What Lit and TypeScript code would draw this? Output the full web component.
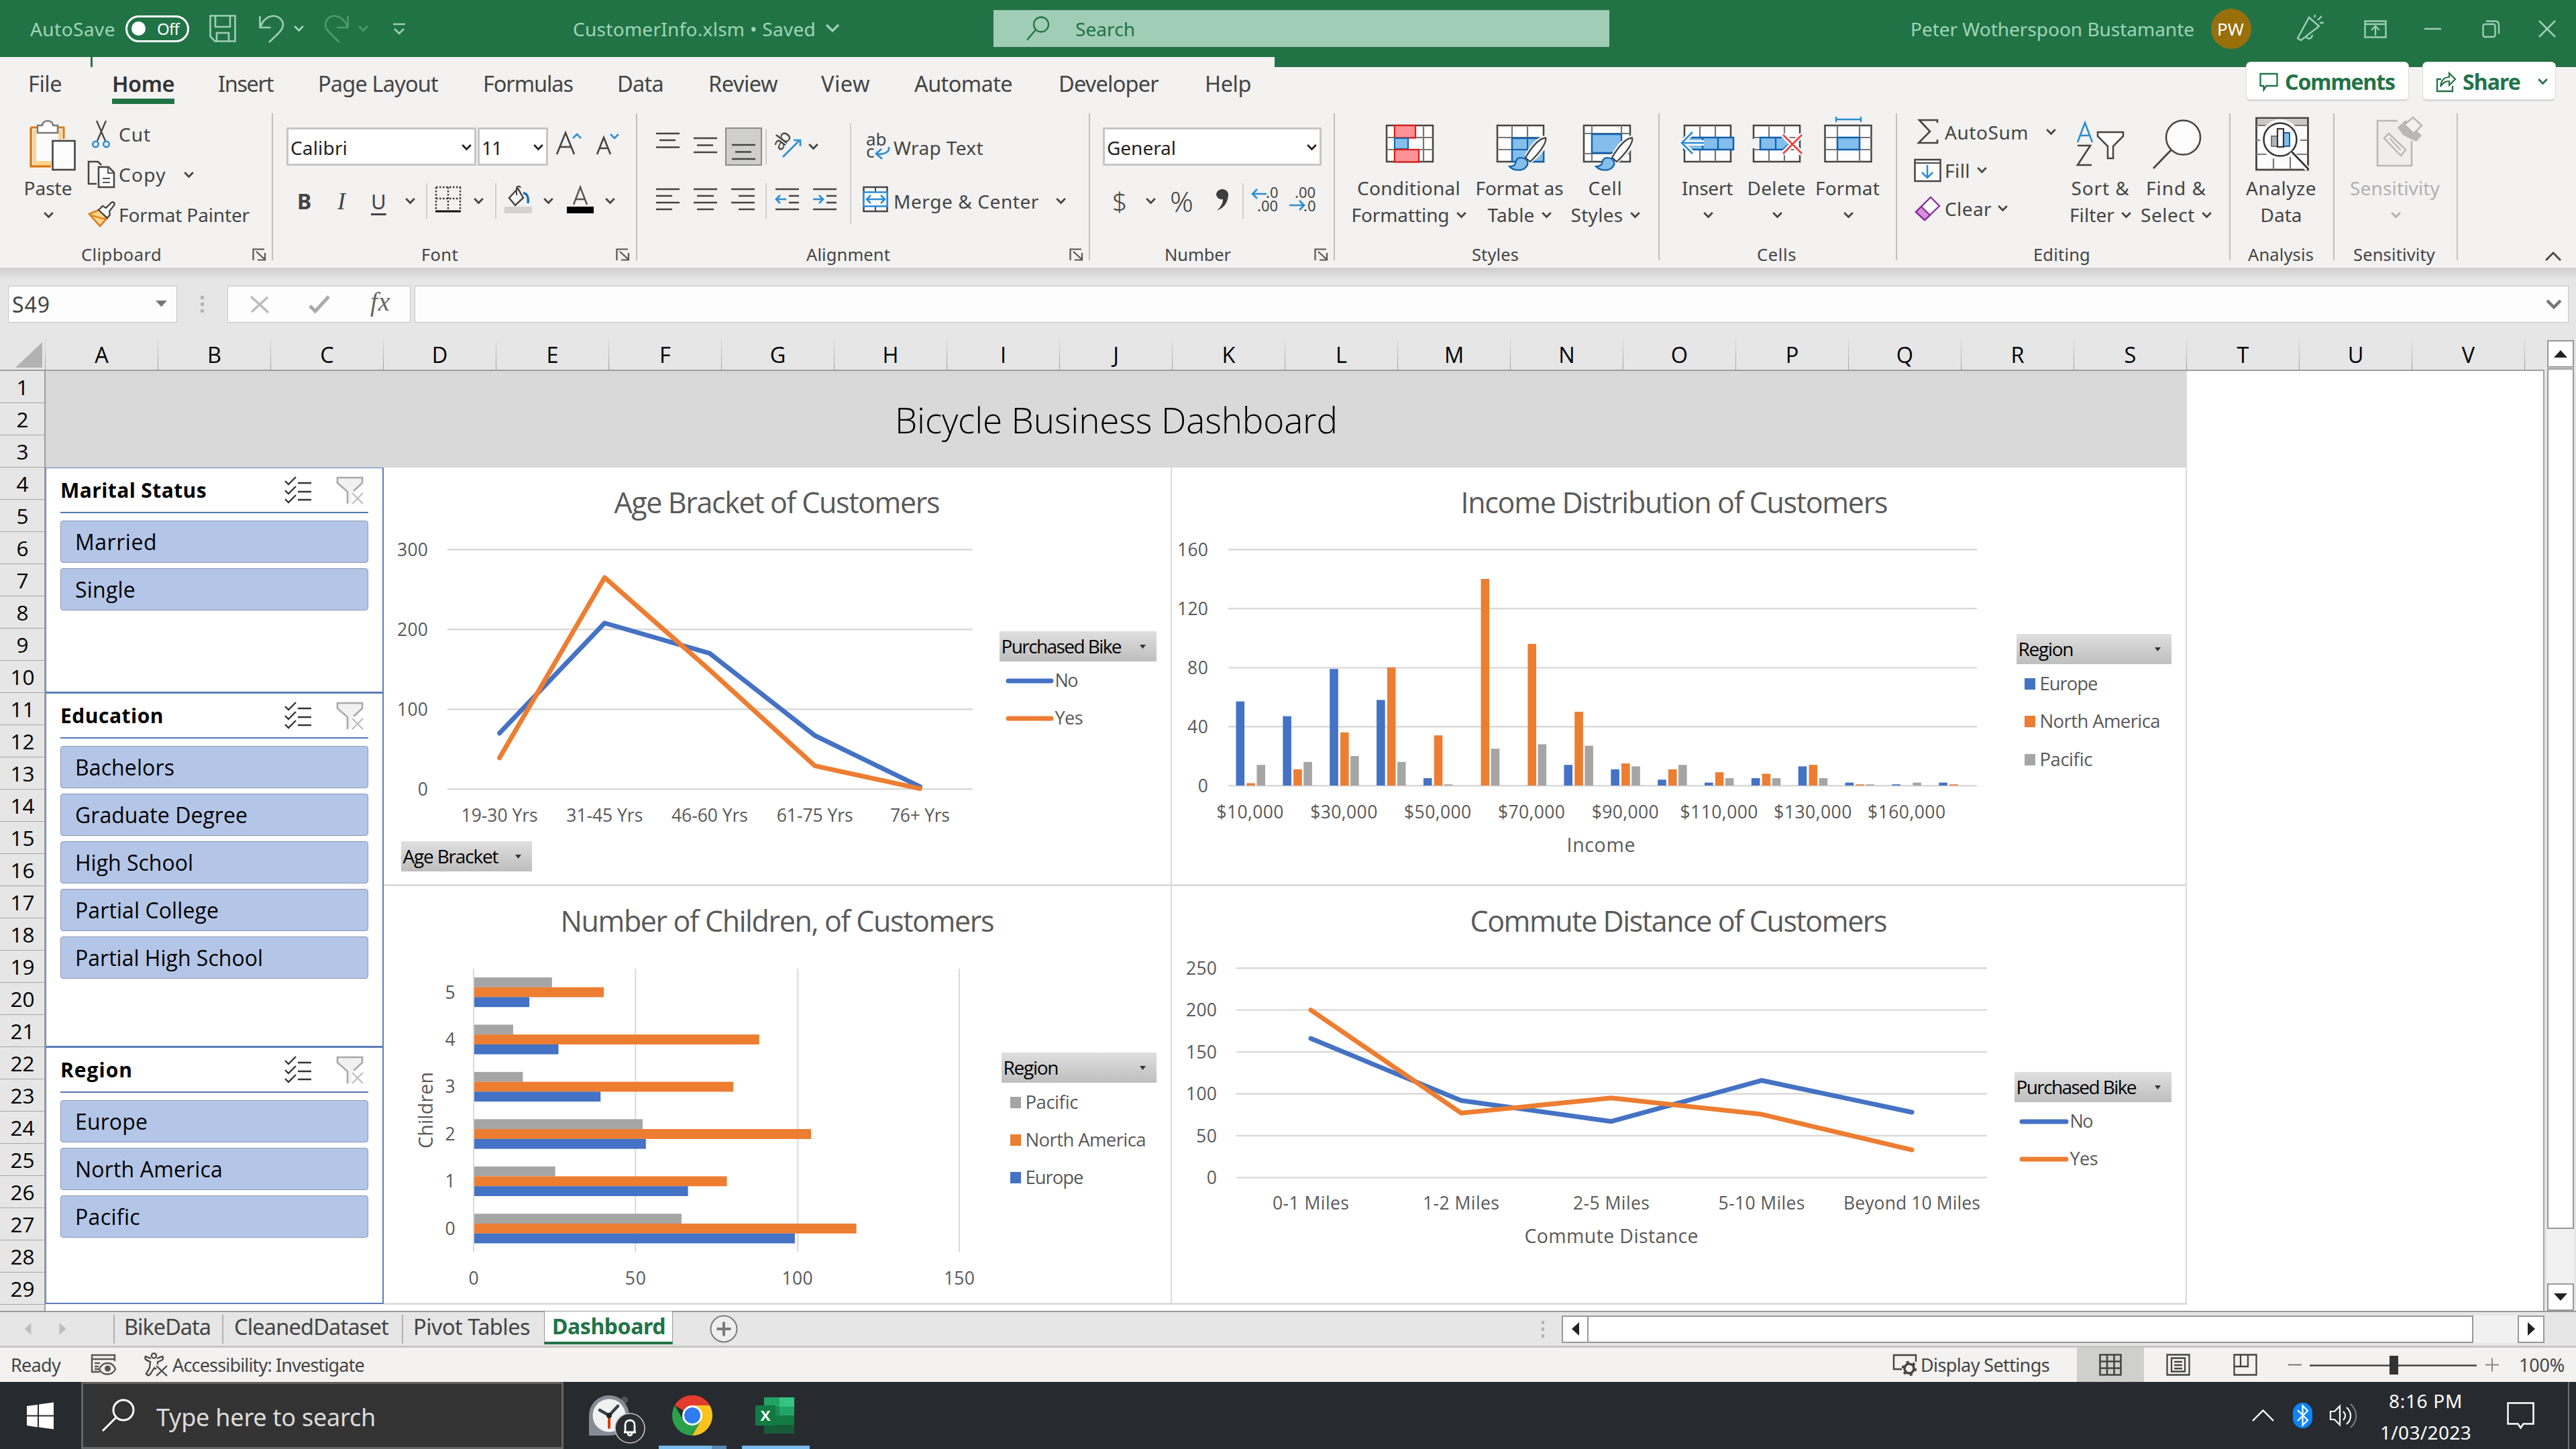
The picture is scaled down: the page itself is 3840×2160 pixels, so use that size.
import { LitElement, html, svg, css, unsafeCSS } from "lit";
import { customElement } from "lit/decorators.js";

/* ---------- helpers ---------- */

// Grid whose columns begin at the given x positions, inside a box that begins at `origin`.
const track = (origin: number, ...xs: number[]) =>
  unsafeCSS(
    `display:grid;align-items:center;justify-items:start;padding-left:${xs[0] - origin}px;grid-template-columns:` +
      xs.slice(1).map((x, i) => `${x - xs[i]}px`).join(" ") + " auto;"
  );

// Text label with a nominal width; letter spacing is computed once it is laid out.
const T = (text: string, w: number, cls = "") =>
  html`<span class="t ${cls}" data-w=${w}>${text}</span>`;

const ico = (x: number, y: number, w: number, h: number, body: unknown) =>
  html`<svg class="i" width=${w} height=${h} viewBox="${x} ${y} ${w} ${h}" fill="none">${body}</svg>`;

const chev = (cls = "") =>
  html`<svg class="i chev ${cls}" width="15" height="11" viewBox="0 0 15 11" fill="none"><path d="M1.2 2l6.3 6.4L13.8 2" stroke="currentColor" stroke-width="2.8"/></svg>`;

const launcher = () =>
  html`<svg class="i" width="21" height="19" viewBox="0 0 21 19" fill="none" stroke="#555" stroke-width="2.2"><path d="M1.5 18V1.5H18M6 5l12 11M19 7v10.500H8"/></svg>`;

class Fitted extends LitElement {
  firstUpdated() {
    this.renderRoot.querySelectorAll<HTMLElement>("[data-w]").forEach((el) => {
      const want = Number(el.dataset.w) + 3;
      const have = el.getBoundingClientRect().width;
      const n = (el.textContent || "").length;
      if (n > 0 && have > 0) el.style.letterSpacing = `${(want - have) / n}px`;
    });
  }
}

const base = css`
  * { box-sizing: border-box; }
  .t { white-space: pre; width: max-content; display: inline-block; margin-left: -2px; }
  .i { display: block; flex: none; overflow: visible; }
`;

const BLUE = "#4472c4", ORANGE = "#ed7d31", GRAY = "#a5a5a5";

/* ---------- charts ---------- */

const ct = (text: string, x: number, y: number, size: number, w: number, anchor = "start", fill = "#595959") =>
  svg`<text x=${anchor === "start" ? x - 1.5 : x} y=${y} font-size=${size} textLength=${w + 2} text-anchor=${anchor} fill=${fill}>${text}</text>`;

const hGrid = (x1: number, x2: number, ys: number[]) =>
  ys.map((y) => svg`<path d="M${x1} ${y}H${x2}" stroke="#d9d9d9" stroke-width="2.400"/>`);

const field = (text: string, x: number, y: number, w: number, tw: number) => svg`
  <rect x=${x} y=${y} width=${w} height="45" fill="url(#btn)"/>
  ${ct(text, x + 4, y + 32.5, 28, tw, "start", "#000")}
  <path d="M${x + w - 25} ${y + 20}h9l-4.500 6z" fill="#333"/>`;

const lineKey = (text: string, x1: number, x2: number, y: number, tw: number, color: string) => svg`
  <path d="M${x1 + 3} ${y}H${x2 - 3}" stroke=${color} stroke-width="7" stroke-linecap="round"/>
  ${ct(text, x2 + 4, y + 9, 27, tw)}`;

const boxKey = (text: string, x: number, y: number, tw: number, color: string) => svg`
  <rect x=${x} y=${y} width="16" height="17" fill=${color}/>
  ${ct(text, x + 24, y + 17.5, 27.5, tw)}`;

const series = (xs: number[], vals: number[], zero: number, unit: number, color: string) => svg`
  <polyline points=${xs.map((x, i) => `${x},${zero - vals[i] * unit}`).join(" ")} fill="none" stroke=${color}
    stroke-width="7" stroke-linecap="round" stroke-linejoin="round"/>`;

const defs = svg`<defs><linearGradient id="btn" x1="0" y1="0" x2="0" y2="1"><stop offset="0" stop-color="#dfdfdf"/><stop offset="1" stop-color="#bebebe"/></linearGradient></defs>`;

const chartStyles = css`
  :host { display: block; background: #fff; border-right: 2px solid #d9d9d9; border-bottom: 3px solid #dcdcdc; box-sizing: border-box; overflow: hidden; }
  svg { display: block; font-family: "Open Sans", sans-serif; }
`;

@customElement("age-chart")
class AgeChart extends LitElement {
  static styles = chartStyles;
  render() {
    const xs = [744.6, 901.3, 1058, 1214.7, 1371.4];
    const unit = 356.9 / 300;
    return html`<svg width="1175" height="624" viewBox="572 697 1175 624">${defs}
      ${ct("Age Bracket of Customers", 917, 765, 43, 484)}
      ${hGrid(667, 1450, [819.3, 938.2, 1057.3, 1176.2])}
      ${[300, 200, 100, 0].map((v, i) => ct(String(v), 638, 829 + i * 119, 26.5, v ? 44 : 12.5, "end"))}
      ${series(xs, [70, 208, 170, 67, 3], 1176.2, unit, BLUE)}
      ${series(xs, [39, 265, 149, 29, 0.5], 1176.2, unit, ORANGE)}
      ${["19-30 Yrs", "31-45 Yrs", "46-60 Yrs", "61-75 Yrs", "76+ Yrs"].map((l, i) => ct(l, xs[i], 1225, 26.5, i === 4 ? 87 : 112, "middle"))}
      ${field("Purchased Bike", 1490, 941, 234, 178)}
      ${lineKey("No", 1500, 1570, 1015, 33, BLUE)}
      ${lineKey("Yes", 1500, 1570, 1071, 40, ORANGE)}
      ${field("Age Bracket", 598, 1254, 195, 141)}
    </svg>`;
  }
}

@customElement("income-chart")
class IncomeChart extends LitElement {
  static styles = chartStyles;
  render() {
    const europe = [57, 47, 79, 58, 5, 0, 0, 14, 11, 4, 2, 5, 13, 2, 0.8, 2];
    const america = [1.6, 11, 36, 80, 34, 140, 96, 50, 15, 11, 9, 8, 14, 0.8, 0, 0.8];
    const pacific = [14, 16, 20, 16, 0.8, 25, 28, 27, 13, 14, 5, 5, 5, 0.8, 2, 0];
    const bars = (vals: number[], x0: number, color: string) =>
      vals.map((v, i) => v ? svg`<rect x=${x0 + i * 69.85} y=${1171 - v * 2.2} width="12.600" height=${v * 2.2} fill=${color}/>` : null);
    const labels = ["$10,000", "$30,000", "$50,000", "$70,000", "$90,000", "$110,000", "$130,000", "$160,000"];
    return html`<svg width="1513" height="624" viewBox="1747 697 1513 624">${defs}
      ${ct("Income Distribution of Customers", 2179, 765, 43, 635)}
      ${hGrid(1831, 2947, [819.3, 907.2, 995.4, 1083.3, 1171.2])}
      ${[160, 120, 80, 40, 0].map((v, i) => ct(String(v), 1801, 829 + i * 88, 26.5, v > 99 ? 44 : v ? 29 : 12.5, "end"))}
      ${bars(europe, 1842.5, BLUE)}${bars(america, 1858.3, ORANGE)}${bars(pacific, 1873.4, GRAY)}
      ${labels.map((l, i) => ct(l, 1863.5 + i * 139.8, 1219.5, 26.5, i < 5 ? 98 : 114, "middle"))}
      ${ct("Income", 2337, 1269.5, 28.5, 100)}
      ${field("Region", 3006, 945, 231, 81)}
      ${boxKey("Europe", 3018, 1011, 85, BLUE)}
      ${boxKey("North America", 3018, 1067, 178, ORANGE)}
      ${boxKey("Pacific", 3018, 1124, 77, GRAY)}
    </svg>`;
  }
}

@customElement("children-chart")
class ChildrenChart extends LitElement {
  static styles = chartStyles;
  render() {
    const rows = [[5, 24, 40, 17], [4, 12, 88, 26], [3, 15, 80, 39], [2, 52, 104, 53], [1, 25, 78, 66], [0, 64, 118, 99]];
    const colors = [GRAY, ORANGE, BLUE];
    return html`<svg width="1175" height="624" viewBox="572 1321 1175 624">${defs}
      ${ct("Number of Children, of Customers", 837, 1389, 43, 645)}
      ${[706, 947.3, 1189.3, 1430].map((x) => svg`<path d="M${x} 1444V1866" stroke="#d9d9d9" stroke-width="2"/>`)}
      ${rows.map((r, i) => svg`
        ${[0, 1, 2].map((k) => svg`<rect x="707" y=${1457 + i * 70.45 + k * 14.7} width=${r[k + 1] * 4.827} height="14.800" fill=${colors[k]}/>`)}
        ${ct(String(r[0]), 671, 1488.5 + i * 70.4, 26.5, 12.5, "middle")}`)}
      ${[0, 50, 100, 150].map((v, i) => ct(String(v), 706 + i * 241.3, 1914.5, 26.5, [12.5, 29, 44, 44][i], "middle"))}
      <text transform="translate(644.500 1655) rotate(-90)" font-size="28.500" text-anchor="middle" textLength="114" fill="#595959">Children</text>
      ${field("Region", 1493, 1569, 231, 81)}
      ${boxKey("Pacific", 1506, 1635, 77, GRAY)}
      ${boxKey("North America", 1506, 1691, 178, ORANGE)}
      ${boxKey("Europe", 1506, 1747, 85, BLUE)}
    </svg>`;
  }
}

@customElement("commute-chart")
class CommuteChart extends LitElement {
  static styles = chartStyles;
  render() {
    const xs = [1954, 2178, 2402, 2626, 2850];
    const labels: [string, number][] = [["0-1 Miles", 112], ["1-2 Miles", 112], ["2-5 Miles", 112], ["5-10 Miles", 127], ["Beyond 10 Miles", 202]];
    return html`<svg width="1513" height="624" viewBox="1747 1321 1513 624">${defs}
      ${ct("Commute Distance of Customers", 2193, 1389, 43, 620)}
      ${hGrid(1843, 2962, [1443.2, 1505.6, 1568, 1630.5, 1693, 1755.4])}
      ${[250, 200, 150, 100, 50, 0].map((v, i) => ct(String(v), 1814, 1453 + i * 62.45, 26.5, v > 99 ? 44 : v ? 29 : 12.5, "end"))}
      ${series(xs, [166, 92, 67, 116, 78], 1755.4, 1.249, BLUE)}
      ${series(xs, [200, 77, 95, 75.5, 33], 1755.4, 1.249, ORANGE)}
      ${labels.map(([l, w], i) => ct(l, xs[i], 1803, 26.5, w, "middle"))}
      ${ct("Commute Distance", 2274, 1853, 28.5, 257)}
      ${field("Purchased Bike", 3003, 1598, 234, 178)}
      ${lineKey("No", 3011, 3083, 1672, 33, BLUE)}
      ${lineKey("Yes", 3011, 3083, 1728, 40, ORANGE)}
    </svg>`;
  }
}

/* ---------- slicers ---------- */

@customElement("sheet-slicer")
class SheetSlicer extends Fitted {
  static properties = { heading: { attribute: false }, items: { attribute: false } };
  declare heading: [string, number];
  declare items: [string, number][];
  static styles = [base, css`
    :host { display: flex; flex-direction: column; box-sizing: border-box; width: 504px; background: #fff; border: 2px solid #5b7db8; border-left: 1px solid #5b7db8; border-top-width: 1px; padding: 0 21px; font-family: "Open Sans", sans-serif; color: #000; }
    .head { height: 67px; border-bottom: 2px solid #5577b0; display: grid; grid-template-columns: 334px 77px auto; align-items: center; padding-bottom: 0; }
    .name { font-weight: 700; font-size: 30px; margin-left: 0; }
    .item { height: 63px; margin-top: 8px; border: 1px solid #8a97b3; border-radius: 4px; background: #b4c6e7; display: flex; align-items: center; padding-left: 23px; font-size: 32px; flex: none; }
    .first { margin-top: 11px; }
  `];
  render() {
    return html`<div class="head">
        ${T(this.heading[0], this.heading[1], "name")}
        ${ico(424, 710, 41, 39, svg`<path d="M425 716l5 5 11-11M425 730l5 5 11-11M425 743l5 5 11-11M444 719h20M444 732h20M444 744h20" stroke="#333" stroke-width="2.400"/>`)}
        ${ico(501, 709, 41, 42, svg`<path d="M503 711h37v7l-16 14v17h-6v-17l-15-14z" fill="#f1f1f1"/><path d="M518 750v-18l-15-13v-8h37v8l-13 12M541 711" stroke="#a9a9a9" stroke-width="2.600"/><path d="M525 734l16 16M541 734l-16 16" stroke="#bcbcbc" stroke-width="2.200"/>`)}
      </div>
      ${this.items.map(([l, w], i) => html`<div class="item ${i ? "" : "first"}">${T(l, w)}</div>`)}`;
  }
}

/* ---------- ribbon ---------- */

const D = "#444", B = "#2a8dd4";
const lines = (segs: number[][]) => svg`<path d=${segs.map(([x, y, w]) => `M${x} ${y}h${w}`).join("")} stroke=${D} stroke-width="2.600"/>`;
const gridBox = (x: number, y = 187) => svg`<rect x=${x} y=${y} width="69" height="54" fill="#fdfdfd" stroke="#444" stroke-width="2.500"/>`;
const brush = (x: number) => svg`
  <path d="M${x + 45} ${231}C${x + 52} 218 ${x + 62} 207 ${x + 73} 205C${x + 75} 214 ${x + 64} 228 ${x + 49} 240z" fill="#fff" stroke="#f3f2f1" stroke-width="7"/>
  <path d="M${x + 42} 235C${x + 52} 218 ${x + 63} 206 ${x + 72} 205.500C${x + 74} 213 ${x + 62} 229 ${x + 49} 241z" fill="#fdfdfd" stroke="#444" stroke-width="2.300"/>
  <path d="M${x + 18} 248c8 0 9-3 10-8c2-7 14-6 17 1c2 7-6 13-14 12.500c-5 0-10-2-13-5.500z" fill="#83beec" stroke="#0f62ad" stroke-width="2.200"/>`;

@customElement("excel-ribbon")
class ExcelRibbon extends Fitted {
  static styles = [base, css`
    :host { display: flex; height: 234px; background: #f3f2f1; font-family: "Noto Sans", sans-serif; font-size: 28px; color: #444; line-height: 40px; overflow: hidden; }
    .group { height: 234px; flex: none; display: flex; flex-direction: column; }
    .body { height: 199px; display: flex; flex: none; }
    .foot { height: 30px; font-size: 25.500px; line-height: 30px; }
    .rule { width: 2px; margin: 4px 0 11px; background: #c1c0bf; flex: none; }
    .vr { width: 2px; height: 53px; background: #cfcecd; }
    .chev { color: #444; }
    .w405 { width: 405px; } .w541 { width: 541px; } .w673 { width: 673px; } .w363 { width: 363px; } .w482 { width: 482px; }
    .w352 { width: 352px; } .w495 { width: 495px; } .w153 { width: 153px; } .w182 { width: 182px; }
    .big { display: flex; flex-direction: column; align-items: center; flex: none; }
    .two { display: flex; align-items: center; gap: 10px; height: 40px; }
    .dim { color: #b1b0af; } .dim .chev { color: #b1b0af; }
    .fclip { ${track(0, 123, 376)} } .ffont { ${track(407, 630, 918)} } .falign { ${track(950, 1204, 1594)} }
    .fnum { ${track(1625, 1738, 1959)} } .fsty { ${track(1990, 2196)} } .fcell { ${track(2474, 2621)} }
    .fedit { ${track(2828, 3033)} } .fana { ${track(3325, 3353)} } .fsen { ${track(3480, 3510)} }
    .paste { width: 75px; margin-left: 35px; }
    .stack { display: flex; flex-direction: column; padding-top: 5px; }
    .clipstack { margin-left: 20px; }
    .clipstack > div { height: 60px; ${track(130, 130, 179, 274)} }
    .clipstack > .wide { grid-template-columns: 49px auto; }
    .rows { display: flex; flex-direction: column; padding-top: 25px; }
    .r1 { height: 57px; margin-bottom: 26px; } .r2 { height: 53px; }
    .combo { height: 57px; background: #fff; border: 3px solid #c6c6c6; display: flex; align-items: center; justify-content: space-between; padding: 2px 4px 0 5px; color: #222; }
    .combo .chev { color: #222; }
    .c1 { width: 283px; } .c2 { width: 105px; } .c3 { width: 326px; }
    .font1 { ${track(407, 427, 712, 829, 889)} }
    .font2 { ${track(407, 445, 503, 554, 604, 635, 649, 706, 738, 752, 810, 844, 902)} }
    .b { font-weight: 700; font-size: 32px; margin-left: -2px; } .it { font-family: "Liberation Serif", serif; font-style: italic; font-size: 36px; }
    .u { font-size: 31px; text-decoration: underline; text-decoration-thickness: 2.500px; text-underline-offset: 6px; margin-left: -1px; }
    .al1 { ${track(950, 978, 1034, 1081, 1141, 1154, 1205)} }
    .al2 { ${track(950, 978, 1034, 1090, 1141, 1155, 1212)} }
    .albox { width: 317px; flex: none; }
    .on { width: 55px; height: 57px; background: #cfcfcd; border: 2px solid #8b8b89; display: flex; align-items: center; justify-content: center; }
    .tall { width: 2px; height: 150px; margin-top: 19px; background: #cfcecd; }
    .wr1 { ${track(1269, 1287, 1334)} } .wr2 { ${track(1269, 1286, 1334, 1574)} }
    .wr1 .t { margin-top: 2px; }
    .num1 { ${track(1625, 1644)} }
    .num2 { ${track(1625, 1659, 1708, 1746, 1811, 1852, 1865, 1922)} }
    .dollar { font-size: 39px; font-weight: 300; margin-left: -1px; } .pct { font-size: 43px; font-weight: 300; }
    .styles { padding-left: 25px; gap: 12px; }
    .s1 { width: 172px; } .s2 { width: 124px; } .s3 { width: 104px; }
    .styles .s2 { margin-left: 5px; } .styles .s3 { margin-left: 2px; }
    .cells { padding-left: 28px; }
    .k1 { width: 88px; } .k2 { width: 116px; margin-left: 1px; } .k3 { width: 96px; margin-left: 0; }
    .edit { width: 250px; padding-top: 3px; flex: none; }
    .edit > div { height: 57px; }
    .e1 { ${track(2828, 2853, 2901, 3050)} } .e2 { ${track(2828, 2853, 2901, 2947)} } .e3 { ${track(2828, 2853, 2901, 2978)} }
    .sort { width: 106px; margin-left: 1px; } .find { width: 104px; margin-left: 8px; }
    .ana { width: 153px; } .sen { width: 182px; }
    .end { margin-left: auto; display: flex; align-items: flex-end; padding: 0 21px 10px 0; }
  `];
  clipboard() {
    return html`<div class="group w405"><div class="body">
      <div class="big paste">${ico(35, 165, 75, 95, svg`
        <path d="M46 190h49v17M46 190v58h30" stroke="#e07b12" stroke-width="3"/><path d="M49 193h43v15l-14 0v38H49z" fill="#fbd58d"/>
        <path d="M54 197h33v12h-9v31H54z" fill="#fbfbfb"/><path d="M46 190v58h30" stroke="#d9730a" stroke-width="2.500"/>
        <path d="M56 198v-11h7c0-9 16-9 16 0h7v11z" fill="#fff" stroke="#7a7a7a" stroke-width="2.500"/>
        <rect x="78.500" y="210" width="33" height="43" fill="#fdfdfd" stroke="#444" stroke-width="2.600"/>`)}
        ${T("Paste", 69)}<div class="two">${chev()}</div></div>
      <div class="stack clipstack">
        <div>${ico(130, 177, 40, 42, svg`<path d="M144 178l13 30M158 178l-13 30" stroke="#444" stroke-width="2.300"/><circle cx="142.500" cy="213" r="4.300" stroke="${B}" stroke-width="2.500"/><circle cx="158.500" cy="213" r="4.300" stroke="${B}" stroke-width="2.500"/>`)}${T("Cut", 45)}</div>
        <div>${ico(130, 238, 42, 41, svg`<path d="M144 272h-12v-33h14l5 5" stroke="#444" stroke-width="2.500"/><path d="M147 247h15l8 8v22h-23z" fill="#fdfdfd" stroke="#444" stroke-width="2.500"/><path d="M161 247v9h9M153 264h11M153 270h11" stroke="#555" stroke-width="2"/>`)}${T("Copy", 68)}${chev()}</div>
        <div class="wide">${ico(130, 297, 42, 40, svg`<path d="M133 316l16-7 10 14-10 11z" fill="#fbd58d" stroke="#e07b12" stroke-width="2.600"/><path d="M136 318l22 6" stroke="#e07b12" stroke-width="2"/><path d="M147 310l6-6 5 3 8-8c3-2 6 1 4 4l-7 9 1 5-4 5z" fill="#fff" stroke="#444" stroke-width="2.300"/>`)}${T("Format Painter", 192)}</div>
      </div></div><div class="foot fclip">${T("Clipboard", 117)}${launcher()}</div></div>`;
  }
  font() {
    return html`<div class="group w541"><div class="body"><div class="rows">
      <div class="r1 font1"><div class="combo c1">${T("Calibri", 82)}${chev()}</div><div class="combo c2">${T("11", 27)}${chev()}</div>
        ${ico(829, 190, 40, 57, svg`<path d="M830 230l13-32 13 32M835 219h16" stroke="#444" stroke-width="2.600"/><path d="M854 206l6-6 6 6" stroke="${B}" stroke-width="2.600"/>`)}
        ${ico(889, 190, 40, 57, svg`<path d="M890 230l10-25 10 25M894 221h12" stroke="#444" stroke-width="2.600"/><path d="M910 200l6 6 6-6" stroke="${B}" stroke-width="2.600"/>`)}</div>
      <div class="r2 font2"><span class="b">B</span><span class="it">I</span><span class="u">U</span>${chev()}<span class="vr"></span>
        ${ico(649, 273, 38, 53, svg`<path d="M650 279h37M650 279v34M668 279v34M686 279v34M650 296h37" stroke="#333" stroke-width="2.400" stroke-dasharray="2.500 2.500"/><path d="M649 315h38" stroke="#111" stroke-width="3"/>`)}${chev()}<span class="vr"></span>
        ${ico(752, 273, 42, 53, svg`<path d="M759 295l13-14 8 14-12 11z" fill="#fdfdfd" stroke="#444" stroke-width="2.500"/><path d="M770 291v-11c1-3 5-3 6 0" stroke="#444" stroke-width="2"/><path d="M780 288c6 0 8 6 7 15" stroke="#1b6db5" stroke-width="3.500"/><rect x="752" y="308" width="41" height="10" fill="#d3d2d1"/>`)}${chev()}
        ${ico(844, 273, 42, 53, svg`<path d="M855 305l10-26 10 26M858 297h13" stroke="#555" stroke-width="2.500"/><rect x="845" y="308" width="40" height="10" fill="#000"/>`)}${chev()}</div>
    </div></div><div class="foot ffont">${T("Font", 52)}${launcher()}</div></div>`;
  }
  alignment() {
    return html`<div class="group w673"><div class="body"><div class="rows albox">
      <div class="r1 al1">${ico(978, 190, 36, 57, lines([[978, 199, 35], [983, 209, 24], [978, 219.500, 35]]))}
        ${ico(1034, 190, 36, 57, lines([[1034, 206, 35], [1039, 216.500, 24], [1034, 227, 35]]))}
        <div class="on">${ico(1090, 190, 36, 53, lines([[1090, 214, 35], [1095, 224.500, 24], [1090, 235, 35]]))}</div><span class="vr"></span>
        ${ico(1154, 190, 42, 57, svg`<text transform="translate(1164 226) rotate(-54)" font-size="27" fill="#444" textLength="29" font-family="Noto Sans, sans-serif">ab</text><path d="M1167 234l25-25M1183 209h10v9" stroke="${B}" stroke-width="2.600"/>`)}${chev()}</div>
      <div class="r2 al2">${ico(978, 273, 36, 53, lines([[978, 282, 35], [978, 292, 24], [978, 302, 35], [978, 312, 24]]))}
        ${ico(1034, 273, 36, 53, lines([[1034, 282, 35], [1039, 292, 25], [1034, 302, 35], [1039, 312, 25]]))}
        ${ico(1090, 273, 36, 53, lines([[1090, 282, 35], [1101, 292, 24], [1090, 302, 35], [1101, 312, 24]]))}<span class="vr"></span>
        ${ico(1155, 273, 37, 53, svg`${lines([[1156, 282, 35], [1176, 292, 15], [1176, 302, 15], [1156, 312, 35]])}<path d="M1172 297h-15M1163 291l-6 6 6 6" stroke="${B}" stroke-width="2.600"/>`)}
        ${ico(1212, 273, 37, 53, svg`${lines([[1212, 282, 35], [1232, 292, 15], [1232, 302, 15], [1212, 312, 35]])}<path d="M1212 297h15M1221 291l6 6-6 6" stroke="${B}" stroke-width="2.600"/>`)}</div>
      </div><span class="tall"></span>
      <div class="rows"><div class="r1 wr1">${ico(1287, 190, 42, 57, svg`<text font-size="26" fill="#444" font-family="Noto Sans, sans-serif"><tspan x="1291" y="217">ab</tspan><tspan x="1291" y="235">c</tspan></text><path d="M1325 219c1 7-4 11-18 11M1314 222l-8 7 9 8" stroke="${B}" stroke-width="2.800"/>`)}${T("Wrap Text", 131)}</div>
      <div class="r2 wr2">${ico(1286, 273, 40, 53, svg`<rect x="1287.500" y="279" width="35" height="36" fill="#fdfdfd" stroke="#444" stroke-width="2.500"/><path d="M1305 279v36" stroke="#444" stroke-width="2"/><rect x="1287.500" y="286.500" width="35" height="21" fill="#fdfdfd" stroke="${B}" stroke-width="2.500"/><path d="M1292 297h27M1298 291l-6 6 6 6M1313 291l6 6-6 6" stroke="${B}" stroke-width="2.500"/>`)}${T("Merge & Center", 214)}${chev()}</div></div>
    </div><div class="foot falign">${T("Alignment", 122)}${launcher()}</div></div>`;
  }
  number() {
    return html`<div class="group w363"><div class="body"><div class="rows">
      <div class="r1 num1"><div class="combo c3">${T("General", 100)}${chev()}</div></div>
      <div class="r2 num2"><span class="dollar">$</span>${chev()}<span class="pct t" data-w="36">%</span>
        ${ico(1811, 273, 22, 53, svg`<path d="M1813 289a9 8 0 1 1 18 2c-1 12-7 19-17 23c6-6 9-11 9-17c-6 1-10-3-10-8z" fill="#3d3d3d"/>`)}<span class="vr"></span>
        ${ico(1865, 273, 41, 53, svg`<path d="M1888 289h-21M1874 282l-7 7 7 7" stroke="${B}" stroke-width="2.600"/><text font-size="22" fill="#444" font-family="Noto Sans, sans-serif"><tspan x="1887" y="295">.0</tspan><tspan x="1874" y="315">.00</tspan></text>`)}
        ${ico(1922, 273, 41, 53, svg`<path d="M1922 306h22M1937 299l7 7-7 7" stroke="${B}" stroke-width="2.600"/><text font-size="22" fill="#444" font-family="Noto Sans, sans-serif"><tspan x="1930" y="295">.00</tspan><tspan x="1943" y="315">.0</tspan></text>`)}</div>
    </div></div><div class="foot fnum">${T("Number", 96)}${launcher()}</div></div>`;
  }
  stylesGroup() {
    return html`<div class="group w482"><div class="body styles">
      <div class="big s1">${ico(2059, 165, 86, 95, svg`${gridBox(2068)}<path d="M2080 187v54M2123 187v54M2068 205h69M2068 223h69" stroke="#777" stroke-width="2.200"/><rect x="2080" y="187" width="31" height="18.500" fill="#ff9296" stroke="#d8201c" stroke-width="2.300"/><rect x="2080" y="206" width="20" height="16" fill="#83beec" stroke="#0f62ad" stroke-width="2"/><rect x="2080" y="223" width="36" height="18.500" fill="#ff9296" stroke="#d8201c" stroke-width="2.300"/>`)}
        ${T("Conditional", 151)}<div class="two">${T("Formatting", 143)}${chev()}</div></div>
      <div class="big s2">${ico(2223, 165, 86, 95, svg`${gridBox(2232)}<path d="M2254 187v54M2277 187v54M2232 205h69M2232 223h69" stroke="#777" stroke-width="2.200"/><path d="M2254 206h47v35h-47z" fill="#83beec" stroke="#0f62ad" stroke-width="2.300"/><path d="M2277 206v35M2254 223h47" stroke="#0f62ad" stroke-width="2"/>${brush(2232)}`)}
        ${T("Format as", 128)}<div class="two">${T("Table", 67)}${chev()}</div></div>
      <div class="big s3">${ico(2351, 165, 86, 95, svg`${gridBox(2361)}<path d="M2373 187v54M2417 187v54M2361 199h69M2361 229h69" stroke="#777" stroke-width="2.200"/><path d="M2373 200h44v28h-44z" fill="#83beec" stroke="#0f62ad" stroke-width="2.300"/>${brush(2361)}`)}
        ${T("Cell", 48)}<div class="two">${T("Styles", 75)}${chev()}</div></div>
    </div><div class="foot fsty">${T("Styles", 67)}</div></div>`;
  }
  cells() {
    return html`<div class="group w352"><div class="body cells">
      <div class="big k1">${ico(2503, 165, 86, 95, svg`${gridBox(2511)}<path d="M2534 187v54M2557 187v54M2511 205h69M2511 223h69" stroke="#777" stroke-width="2.200"/><path d="M2510 205h74v18h-74z" fill="#83beec" stroke="#0f62ad" stroke-width="2.500"/><path d="M2538 205v18M2561 205v18" stroke="#0f62ad" stroke-width="2.300"/><path d="M2540 213h-32M2523 197l-16 16 16 16" stroke="#f8f8f8" stroke-width="8"/><path d="M2540 213h-32M2523 197l-16 16 16 16" stroke="${B}" stroke-width="2.600"/>`)}${T("Insert", 73)}<div class="two">${chev()}</div></div>
      <div class="big k2">${ico(2607, 165, 86, 95, svg`${gridBox(2615)}<path d="M2638 187v54M2661 187v54M2615 205h69M2615 223h69" stroke="#777" stroke-width="2.200"/><path d="M2612 207h14v14h-14z" fill="#f3f2f1"/><path d="M2625 205h34l10 9-10 9h-34z" fill="#83beec" stroke="#0f62ad" stroke-width="2.500"/><path d="M2648 205v18" stroke="#0f62ad" stroke-width="2.300"/><path d="M2659 201l28 28M2687 201l-28 28" stroke="#f8f8f8" stroke-width="8"/><path d="M2659 201l28 28M2687 201l-28 28" stroke="#e8403c" stroke-width="2.600"/>`)}${T("Delete", 84)}<div class="two">${chev()}</div></div>
      <div class="big k3">${ico(2711, 165, 86, 95, svg`${gridBox(2719.5)}<path d="M2738 187v54M2771 187v54M2720 205h69M2720 223h69" stroke="#777" stroke-width="2.200"/><rect x="2738" y="205" width="33" height="18" fill="#83beec" stroke="#0f62ad" stroke-width="2.500"/><path d="M2736 178h37M2736 174v8M2773 174v8" stroke="${B}" stroke-width="2.400"/>`)}${T("Format", 93)}<div class="two">${chev()}</div></div>
    </div><div class="foot fcell">${T("Cells", 56)}</div></div>`;
  }
  editing() {
    return html`<div class="group w495"><div class="body">
      <div class="stack edit">
        <div class="e1">${ico(2853, 174, 42, 42, svg`<path d="M2888 181v-4h-27l16 17-17 17h28v-5" stroke="#444" stroke-width="2.600"/>`)}${T("AutoSum", 122)}${chev()}</div>
        <div class="e2">${ico(2853, 233, 42, 36, svg`<rect x="2854.500" y="235" width="38" height="32" fill="#fdfdfd" stroke="#444" stroke-width="2.500"/><path d="M2854 240h39" stroke="#444" stroke-width="2"/><path d="M2873 243v18M2865 254l8 8 8-8" stroke="${B}" stroke-width="2.500"/>`)}${T("Fill", 35)}${chev()}</div>
        <div class="e3">${ico(2853, 288, 42, 40, svg`<path d="M2878 291l13 13-22 21-13-12z" fill="#fdfdfd" stroke="#8f2f9e" stroke-width="2.400"/><path d="M2864 305l13 13-8 7-13-12z" fill="#d690dc" stroke="#8f2f9e" stroke-width="2.400"/>`)}${T("Clear", 67)}${chev()}</div>
      </div>
      <div class="big sort">${ico(3093, 165, 80, 95, svg`<path d="M3098 212l11-29 11 29M3102 202h14" stroke="${B}" stroke-width="2.600"/><path d="M3098 217h19l-19 29h21" stroke="#444" stroke-width="2.600"/><path d="M3128 197h38v6l-15 15v18h-8v-18l-15-15z" fill="#fdfdfd" stroke="#444" stroke-width="2.500"/>`)}
        ${T("Sort &", 84)}<div class="two">${T("Filter", 64)}${chev()}</div></div>
      <div class="big find">${ico(3203, 165, 80, 95, svg`<circle cx="3252.500" cy="205" r="25.500" fill="#fdfdfd" stroke="#444" stroke-width="2.500"/><path d="M3235 223l-27 28" stroke="#444" stroke-width="2.800"/>`)}
        ${T("Find &", 87)}<div class="two">${T("Select", 78)}${chev()}</div></div>
    </div><div class="foot fedit">${T("Editing", 82)}</div></div>`;
  }
  analysis() {
    return html`<div class="group w153"><div class="body"><div class="big ana">${ico(3360, 165, 82, 95, svg`
      <rect x="3362.500" y="176" width="77" height="77" fill="#fdfdfd" stroke="#444" stroke-width="2.800"/><rect x="3364" y="177" width="74" height="9" fill="#c9c8c7"/><path d="M3362 187h77M3362 209h77M3362 230h77M3388 187v66M3413 187v66" stroke="#777" stroke-width="2.200"/>
      <circle cx="3398" cy="208" r="30" fill="#f8f8f8"/><circle cx="3398" cy="208" r="24.500" fill="#fdfdfd" stroke="#333" stroke-width="2.500"/><path d="M3414 227l25 25" stroke="#fdfdfd" stroke-width="8"/><path d="M3415 226l25 26" stroke="#333" stroke-width="2.800"/>
      <rect x="3385" y="203" width="9" height="15" fill="#b5b5b5" stroke="#777" stroke-width="2"/><rect x="3403" y="198" width="9" height="20" fill="#83beec" stroke="#0f62ad" stroke-width="2"/><rect x="3394" y="192" width="9" height="27" fill="#fff" stroke="#333" stroke-width="2.200"/>`)}
      ${T("Analyze", 102)}${T("Data", 59)}</div></div><div class="foot fana">${T("Analysis", 95)}</div></div>`;
  }
  sensitivity() {
    return html`<div class="group w182"><div class="body"><div class="big sen dim">${ico(3531, 165, 80, 95, svg`
      <path d="M3574 180h-30v67h51v-37" fill="#efeeed" stroke="#b9b8b7" stroke-width="2.500"/><path d="M3574 190l12-11 24 23-8 9-11-5-9-5z" fill="#b9b8b7"/><path d="M3597 175l13 12-12 12-14-13z" fill="#f3f2f1" stroke="#b9b8b7" stroke-width="2.500"/><path d="M3554 206l7-7 25 24-7 9z" fill="#f3f2f1" stroke="#b9b8b7" stroke-width="2.500"/><path d="M3562 206l17 18" stroke="#b9b8b7" stroke-width="2.500"/>`)}
      ${T("Sensitivity", 131)}<div class="two">${chev()}</div></div></div><div class="foot fsen">${T("Sensitivity", 119)}</div></div>`;
  }
  render() {
    const rule = html`<span class="rule"></span>`;
    return html`${this.clipboard()}${rule}${this.font()}${rule}${this.alignment()}${rule}${this.number()}${rule}${this.stylesGroup()}${rule}${this.cells()}${rule}${this.editing()}${rule}${this.analysis()}${rule}${this.sensitivity()}${rule}
      <div class="end">${ico(3794, 376, 25, 14, svg`<path d="M3795 389l11-11 11 11" stroke="#444" stroke-width="2.800"/>`)}</div>`;
  }
}

/* ---------- page ---------- */

const G = "#9fcfb5";

@customElement("app-root")
class AppRoot extends Fitted {
  static styles = [base, css`
    :host { display: flex; flex-direction: column; width: 3840px; height: 2160px; overflow: hidden; background: #e6e6e6; font-family: "Noto Sans", sans-serif; color: #444; }
    .title { height: 85px; flex: none; background: #217346; color: #9fd5b7; font-size: 28px; ${track(0, 47, 187, 312, 386, 438, 482, 534, 585, 856, 1230, 1481, 2850, 3296, 3423, 3524, 3613, 3700, 3784)} }
    .toggle { width: 95px; height: 40px; border: 3px solid #fff; border-radius: 20px; color: #fff; font-size: 24px; display: flex; align-items: center; gap: 19px; padding-left: 6px; line-height: 34px; }
    .knob { width: 21px; height: 21px; border-radius: 50%; background: #fff; flex: none; }
    .gdim { color: #4f9a6f; }
    .search { width: 918px; height: 55px; background: #a0cdb5; display: flex; align-items: center; gap: 40px; padding-left: 49px; color: #217346; }
    .avatar { width: 60px; height: 60px; border-radius: 50%; background: #986f0b; color: #fff; font-size: 26px; display: flex; align-items: center; justify-content: center; }
    .menu { height: 80px; flex: none; font-size: 32.500px;
      background: linear-gradient(#217346, #217346) 1900px 0 / 1940px 15px no-repeat, linear-gradient(#217346, #217346) 135px 0 / 3px 15px no-repeat, #f3f2f1;
      ${track(0, 44, 168, 327, 476, 722, 922, 1058, 1226, 1365, 1580, 1798, 3348, 3611)} }
    .menu > .t { height: 60px; line-height: 60px; }
    .menu .cur { font-weight: 600; color: #333; box-shadow: inset 0 -8px #217346; margin-left: -1px; }
    .act { height: 59px; background: #fff; border: 1px solid #dedcda; border-bottom: 3px solid #dcdad8; border-radius: 7px; align-self: start; margin-top: 7px; display: flex; align-items: center; padding: 2px 0 0 19px; gap: 12px; font-weight: 700; color: #217346; }
    .act .t { font-size: 32px; }
    .comments { width: 243px; } .share { width: 199px; }
    .share .chev { margin-left: 14px; }
    .fx { height: 105px; flex: none; background: linear-gradient(#cdcdcd, #d8d8d8 8px, #e6e6e6 17px); padding-top: 3px; ${track(0, 12, 299, 339, 618)} }
    .fx > div { height: 55px; background: #fdfdfd; border: 1px solid #c3c3c3; display: flex; align-items: center; }
    .name { width: 252px; justify-content: space-between; padding: 0 14px 0 7px; font-size: 32px; }
    .fx .fns { width: 273px; ${track(339, 371, 459, 549)} }
    .fx .bar { width: 3211px; justify-content: flex-end; padding-right: 9px; }
    .main { height: 1450px; flex: none; display: flex; }
    .left { width: 3793px; border-right: 2px solid #a3a3a3; display: flex; flex-direction: column; background: #fff; }
    .cols { height: 49px; background: #e6e6e6; border-bottom: 2px solid #9e9e9e; display: grid; grid-template-columns: 68px repeat(22, 168px) auto; flex: none; font-family: "Open Sans", sans-serif; font-size: 32.500px; color: #000; width: 3795px; }
    .cols div { display: flex; align-items: center; justify-content: center; border-right: 1px solid transparent; border-image: linear-gradient(#e0e0e0, #9b9b9b) 1; padding-top: 2px; line-height: 40px; }
    .cols div:first-child { justify-content: flex-end; padding: 3px 3px 0 0; }
    .cols div:last-child { border: none; }
    .sheet { flex: 1; display: flex; min-height: 0; overflow: hidden; }
    .nums { width: 68px; background: #e6e6e6; border-right: 2px solid #9e9e9e; font-family: "Open Sans", sans-serif; font-size: 31.500px; color: #000; flex: none; }
    .nums div { height: 48px; line-height: 48px; text-align: center; border-bottom: 1px solid #a8a8a8; padding-left: 1px; }
    .canvas { width: 3192px; flex: none; }
    .banner { height: 144px; background: #d9d9d9; color: #000; font-family: "Open Sans", sans-serif; font-weight: 300; font-size: 53px; display: flex; align-items: center; padding-left: 1268px; }
    .dash { display: grid; grid-template-columns: 504px 1175px 1513px; height: 1248px; }
    .slicers { display: grid; grid-template-rows: 336px 528px 383px; }
    .charts { display: grid; grid-template-columns: 1175px 1513px; grid-template-rows: 624px 624px; }
    .scroll { width: 47px; padding-top: 3px; padding-left: 4px; display: flex; flex-direction: column; background: #e6e6e6; }
    .sb { width: 40px; height: 41px; background: #fff; border: 2px solid #989898; display: flex; align-items: center; justify-content: center; flex: none; }
    .vthumb { width: 40px; height: 1283px; margin-top: 1px; background: #fff; border: 2px solid #989898; }
    .vtrack { width: 40px; flex: 1; background: #f1f1f1; }
    .sheets { height: 52px; flex: none; border-top: 2px solid #989898; background: #e6e6e6; font-size: 32.500px; line-height: 40px; ${track(0, 36, 88, 169, 187, 331, 351, 599, 618, 811, 1058, 2298, 2328)} padding-bottom: 0; }
    .sheets > .t { margin-top: -6px; }
    .tabsep { width: 2px; height: 43px; background: #b2b2b2; }
    .active { width: 192px; height: 49px; margin-top: -4px; background: #fff; border-bottom: 4px solid #217346; border-left: 1px solid #989898; border-right: 1px solid #989898; color: #217346; font-weight: 700; font-size: 32px; display: flex; align-items: center; padding-left: 13px; }
    .hbar { display: flex; height: 41px; width: 1465px; background: #f1f1f1; }
    .hthumb { width: 1321px; margin-left: -2px; background: #fff; border: 2px solid #989898; }
    .hbar .sb:last-child { margin-left: auto; }
    .status { height: 54px; flex: none; background: #f3f2f1; border-top: 3px solid #c6c6c6; font-size: 27px; line-height: 40px; ${track(0, 18, 135, 215, 259, 2821, 2865, 3097, 3229, 3328, 3410, 3757)} }
    .seln { width: 100px; height: 51px; background: #cfcfcd; display: flex; align-items: center; justify-content: center; margin-left: -1px; }
    .task { height: 100px; flex: none; background: #272b30; color: #fff; font-size: 28px; ${track(0, 40, 121, 876, 982, 1106, 3357, 3418, 3471, 3549, 3737, 3828)} }
    .find { width: 719px; height: 100px; background: #333; border: 3px solid #636363; display: flex; align-items: center; gap: 34px; padding-left: 28px; font-size: 36px; color: #dcdcdc; }
    .find .t { margin-top: 4px; }
    .app { height: 100px; display: flex; flex-direction: column; justify-content: flex-end; }
    .clock { display: flex; flex-direction: column; align-items: center; width: 136px; line-height: 47px; padding-top: 3px; }
    .peek { width: 2px; height: 100px; background: #6a6d70; }
  `];

  titleBar() {
    return html`<div class="title">
      ${T("AutoSave", 124)}
      <div class="toggle"><span class="knob"></span>${T("Off", 30)}</div>
      ${ico(312, 24, 42, 43, svg`<path d="M313.500 26.500h37v38h-30l-7-7zM321 27v16h22V27M323 64V52h18v12" stroke="${G}" stroke-width="2.600"/>`)}
      ${ico(386, 22, 40, 46, svg`<path d="M387.500 26v17h16M388 42c8-20 27-20 33-8c4 10-4 16-20 31" stroke="${G}" stroke-width="2.600"/>`)}
      ${chev()}
      ${ico(480, 22, 40, 46, svg`<path d="M516.500 26v17h-16M516 42c-8-20-27-20-32-8c-4 10 4 16 20 31" stroke="#4f9a6f" stroke-width="2.600"/>`)}
      ${chev("gdim")}
      ${ico(585, 34, 20, 19, svg`<path d="M586 37h18M588 44l7 7 7-7" stroke="${G}" stroke-width="2.600"/>`)}
      ${T("CustomerInfo.xlsm • Saved", 359)}
      ${ico(1230, 36, 22, 16, svg`<path d="M1232 38l9 9 9-9" stroke="${G}" stroke-width="3.200"/>`)}
      <div class="search">${ico(1530, 23, 35, 37, svg`<circle cx="1552" cy="35.500" r="11" stroke="#217346" stroke-width="2.300"/><path d="M1544 43.500l-13 15" stroke="#217346" stroke-width="2.400"/>`)}${T("Search", 86)}</div>
      ${T("Peter Wotherspoon Bustamante", 420)}
      <div class="avatar">${T("PW", 37)}</div>
      ${ico(3423, 22, 42, 41, svg`<path d="M3425 57l17-31 15 13-27 21zM3438 54c0 5 8 5 9-2M3450 26l1-4M3455 30l6-6M3458 34h6" stroke="${G}" stroke-width="2.400"/>`)}
      ${ico(3524, 28, 34, 28, svg`<path d="M3525.500 30.500h31v24h-31zM3525 35h32M3541 52V38M3535 44l6-6 6 6" stroke="${G}" stroke-width="2.400"/>`)}
      ${ico(3613, 38, 27, 6, svg`<path d="M3614 41h25" stroke="${G}" stroke-width="2.500"/>`)}
      ${ico(3699, 28, 26, 28, svg`<rect x="3700.500" y="35" width="18" height="19" rx="3" stroke="${G}" stroke-width="2.400"/><path d="M3705 30.500h13c4 0 6 2 6 6v13" stroke="${G}" stroke-width="2.400"/>`)}
      ${ico(3784, 29, 26, 26, svg`<path d="M3785 30l24 24M3809 30l-24 24" stroke="${G}" stroke-width="2.500"/>`)}
    </div>`;
  }

  menuBar() {
    const tabs: [string, number][] = [["File", 47], ["Home", 90], ["Insert", 79], ["Page Layout", 176], ["Formulas", 131], ["Data", 66], ["Review", 100], ["View", 70], ["Automate", 143], ["Developer", 146], ["Help", 66]];
    return html`<div class="menu">
      ${tabs.map(([l, w]) => T(l, w, l === "Home" ? "cur" : ""))}
      <div class="act comments">${ico(3368, 106, 28, 29, svg`<path d="M3369.500 109h25v18h-16l-4 6v-6h-5z" stroke="#217346" stroke-width="2.300"/>`)}${T("Comments", 161)}</div>
      <div class="act share">${ico(3630, 106, 30, 32, svg`<path d="M3638 118h-6v18h23v-8" stroke="#217346" stroke-width="2.300"/><path d="M3637 129c1-9 5-14 13-14v-6l9 9-9 9v-6c-6 0-9 2-13 8z" stroke="#217346" stroke-width="2.200"/>`)}${T("Share", 83)}${chev()}</div>
    </div>`;
  }

  formulaBar() {
    return html`<div class="fx">
      <div class="name">${T("S49", 54)}<svg class="i" width="17" height="10" viewBox="0 0 17 10"><path d="M0 0h17l-8.500 9.500z" fill="#777"/></svg></div>
      ${ico(299, 438, 5, 28, svg`<path d="M299 440h5v5h-5zM299 450h5v5h-5zM299 460h5v5h-5z" fill="#b3b3b3"/>`)}
      <div class="fns">
        ${ico(371, 439, 30, 27, svg`<path d="M373 441l26 24M398 442l-24 22" stroke="#bcbcbc" stroke-width="3.600"/>`)}
        ${ico(459, 439, 32, 27, svg`<path d="M461 455l8 8 20-22" stroke="#a9a9a9" stroke-width="5"/>`)}
        ${ico(549, 434, 34, 38, svg`<text x="551" y="463" font-family="Liberation Serif, serif" font-style="italic" font-size="39" fill="#666" textLength="29">fx</text>`)}
      </div>
      <div class="bar">${ico(3795, 446, 24, 15, svg`<path d="M3797 448l10 10 10-10" stroke="#777" stroke-width="4.500"/>`)}</div>
    </div>`;
  }

  sheetArea() {
    const letters = "ABCDEFGHIJKLMNOPQRSTUV".split("");
    return html`<div class="main"><div class="left">
      <div class="cols"><div>${ico(24, 509, 41, 41, svg`<path d="M64 510v38H24z" fill="#b2b2b2"/>`)}</div>${letters.map((l) => html`<div>${l}</div>`)}<div></div></div>
      <div class="sheet">
        <div class="nums">${Array.from({ length: 29 }, (_, i) => html`<div>${i + 1}</div>`)}</div>
        <div class="canvas">
          <div class="banner">${T("Bicycle Business Dashboard", 657)}</div>
          <div class="dash">
            <div class="slicers">
              <sheet-slicer .heading=${["Marital Status", 215]} .items=${[["Married", 119], ["Single", 87]]}></sheet-slicer>
              <sheet-slicer .heading=${["Education", 151]} .items=${[["Bachelors", 145], ["Graduate Degree", 254], ["High School", 173], ["Partial College", 211], ["Partial High School", 277]]}></sheet-slicer>
              <sheet-slicer .heading=${["Region", 105]} .items=${[["Europe", 105], ["North America", 217], ["Pacific", 94]]}></sheet-slicer>
            </div>
            <div class="charts"><age-chart></age-chart><income-chart></income-chart><children-chart></children-chart><commute-chart></commute-chart></div>
          </div>
        </div>
      </div></div>
      <div class="scroll">
        <div class="sb"><svg class="i" width="20" height="11"><path d="M0 11h20L10 0z" fill="#222"/></svg></div>
        <div class="vthumb"></div><div class="vtrack"></div>
        <div class="sb"><svg class="i" width="20" height="11"><path d="M0 0h20L10 11z" fill="#222"/></svg></div>
      </div></div>`;
  }

  sheetTabs() {
    const sep = html`<span class="tabsep"></span>`;
    return html`<div class="sheets">
      <svg class="i" width="11" height="20"><path d="M10.500 1v18L0.500 10z" fill="#bdbdbd"/></svg>
      <svg class="i" width="11" height="20"><path d="M0.500 1v18l10-9z" fill="#bdbdbd"/></svg>
      ${sep}${T("BikeData", 126)}${sep}${T("CleanedDataset", 227)}${sep}${T("Pivot Tables", 171)}
      <div class="active">${T("Dashboard", 166)}</div>
      ${ico(1058, 1959, 42, 42, svg`<circle cx="1079" cy="1980" r="19.500" fill="#efefef" stroke="#7b7b7b" stroke-width="2"/><path d="M1068.500 1980h21M1079 1969.500v21" stroke="#7b7b7b" stroke-width="4"/>`)}
      ${ico(2297, 1966, 5, 27, svg`<path d="M2297 1967h4v5h-4zM2297 1977h4v5h-4zM2297 1987h4v5h-4z" fill="#b3b3b3"/>`)}
      <div class="hbar">
        <div class="sb"><svg class="i" width="11" height="20"><path d="M11 0v20L0 10z" fill="#222"/></svg></div>
        <div class="hthumb"></div>
        <div class="sb"><svg class="i" width="11" height="20"><path d="M0 0v20l11-10z" fill="#222"/></svg></div>
      </div>
    </div>`;
  }

  statusBar() {
    return html`<div class="status">
      ${T("Ready", 71)}
      ${ico(134, 2017, 38, 34, svg`<path d="M148 2044h-12v-25h34v9M136 2025h34M140 2031h8M140 2036h6M140 2040h6" stroke="#555" stroke-width="2.400"/><path d="M147 2040c5-12 20-12 24 0c-5 10-19 10-24 0z" fill="#f3f2f1" stroke="#555" stroke-width="2.300"/><circle cx="159.500" cy="2039" r="4.500" fill="#555"/>`)}
      ${ico(215, 2016, 36, 35, svg`<circle cx="229.500" cy="2020" r="3.600" stroke="#444" stroke-width="2.200"/><path d="M225 2024l-8-3c-2 4 0 5 7 8l-1 9-5 9c3 4 5 2 7-1l5-8 3 2M234 2024l8-3c3 4 0 6-7 8v4M233 2035l16 15M249 2035l-16 15" stroke="#444" stroke-width="2.300"/>`)}
      ${T("Accessibility: Investigate", 283)}
      ${ico(2821, 2017, 37, 34, svg`<path d="M2835 2040h-12v-21h33v10" stroke="#444" stroke-width="2.400"/><circle cx="2846" cy="2039" r="7" stroke="#444" stroke-width="3.500"/><circle cx="2846" cy="2039" r="9.500" stroke="#444" stroke-width="3.500" stroke-dasharray="4 6"/>`)}
      ${T("Display Settings", 189)}
      <div class="seln">${ico(3129, 2015, 34, 33, svg`<path d="M3130.500 2016.500h31v30h-31zM3130 2026.500h32M3130 2036.500h32M3141 2016v31M3151.500 2016v31" stroke="#444" stroke-width="2.600"/>`)}</div>
      ${ico(3229, 2015, 36, 33, svg`<path d="M3230.500 2016.500h33v30h-33zM3237 2021.500h20v20h-20zM3241 2027h12M3241 2032h12M3241 2037h12" stroke="#444" stroke-width="2.300"/>`)}
      ${ico(3328, 2015, 37, 33, svg`<path d="M3330.500 2016.500h33v30h-33zM3331 2034h20v-18M3340 2016v18" stroke="#444" stroke-width="2.300"/>`)}
      ${ico(3410, 2015, 316, 36, svg`<path d="M3411 2032.500h20" stroke="#777" stroke-width="2"/><path d="M3443 2033.500h249" stroke="#444" stroke-width="2.600"/><rect x="3562" y="2019" width="13" height="28" fill="#333"/><path d="M3705 2032.500h20M3715 2022.500v20" stroke="#888" stroke-width="2"/>`)}
      ${T("100%", 65)}
    </div>`;
  }

  taskbar() {
    return html`<div class="task">
      ${ico(40, 2090, 41, 41, svg`<path d="M40 2096l16-2v15.500H40zM58 2093.500l22-3v19H58zM40 2111.500h16v16l-16-2.500zM58 2111.500h22v19l-22-3z" fill="#fff"/>`)}
      <div class="find">${ico(152, 2084, 49, 50, svg`<circle cx="184" cy="2101" r="15" stroke="#fff" stroke-width="3"/><path d="M173 2112l-20 20" stroke="#fff" stroke-width="3"/>`)}${T("Type here to search", 324)}</div>
      ${ico(876, 2073, 88, 74, svg`<circle cx="931" cy="2087" r="5" fill="#555"/><path d="M878 2140v-30a30 30 0 0 1 60 0c0 18-12 30-30 30z" fill="#858c95"/><circle cx="908" cy="2110" r="24.500" fill="#f1f1f1"/><path d="M894 2102l14 8 13-14" stroke="#3c4045" stroke-width="4.500" stroke-linecap="round" stroke-linejoin="round"/><path d="M908 2112v16" stroke="#dd3a0a" stroke-width="4" stroke-linecap="round"/><circle cx="908" cy="2110" r="4" fill="#222"/><circle cx="939" cy="2129" r="22" fill="#2b2d30" stroke="#c4c4c4" stroke-width="1.600"/><path d="M930 2135h18M932 2134v-10c0-9 14-9 14 0v10M936 2136c0 5 6 5 6 0" stroke="#fff" stroke-width="2.800"/>`)}
      <div class="app">${ico(982, 2078, 102, 82, svg`
        <path d="M1032 2110L1006 2095A30 30 0 0 1 1058 2095z" fill="#e33b2e"/><path d="M1006 2095a30 30 0 0 1 52 0h-26l-13 7.500z" fill="#e33b2e"/>
        <path d="M1006 2095A30 30 0 0 0 1032 2140L1045 2117.500 1032 2110 1019 2117.500z" fill="#2aa148"/>
        <path d="M1058 2095a30 30 0 0 1-26 45l13-22.500L1032 2095z" fill="#fcc31f"/>
        <circle cx="1032" cy="2110" r="15" fill="#fff"/><circle cx="1032" cy="2110" r="12" fill="#2f7bf0"/>
        <path d="M982 2155h79v5h-79z" fill="#76b9ed"/><path d="M1061 2155h22v5h-22z" fill="#5889b3"/>`)}</div>
      <div class="app">${ico(1106, 2078, 101, 82, svg`
        <path d="M1139 2083h23v14h-23z" fill="#21a366"/><path d="M1162 2083h22v14h-22z" fill="#33c481"/><path d="M1139 2097h23v13h-23z" fill="#1b8a52"/><path d="M1162 2097h22v13h-22z" fill="#21a366"/><path d="M1139 2110h45v14h-45z" fill="#107c41"/><path d="M1139 2124h45v13h-45z" fill="#185c37"/>
        <rect x="1126" y="2095" width="30" height="30" rx="2" fill="#107c41"/><text x="1141" y="2118" font-size="22" font-weight="700" fill="#fff" text-anchor="middle" font-family="Open Sans, sans-serif">X</text>
        <path d="M1106 2155h101v5h-101z" fill="#76b9ed"/>`)}</div>
      ${ico(3357, 2098, 33, 18, svg`<path d="M3358 2115l15.500-15.500 15.500 15.500" stroke="#fff" stroke-width="2.400"/>`)}
      ${ico(3418, 2090, 30, 40, svg`<rect x="3418" y="2091" width="29" height="38" rx="14.500" fill="#0a84ff"/><path d="M3425 2102l15 15-7.500 7.500v-29l7.500 7.500-15 15" stroke="#fff" stroke-width="2.200"/>`)}
      ${ico(3471, 2090, 42, 40, svg`<path d="M3474 2104h6l8-8v28l-8-8h-6zM3493 2104c4 4 4 9 0 13M3498 2098c8 7 8 18 0 25" stroke="#fff" stroke-width="2.200"/><path d="M3504 2093c11 10 11 25 0 35" stroke="#777" stroke-width="2.200"/>`)}
      <div class="clock">${T("8:16 PM", 107)}${T("1/03/2023", 133)}</div>
      ${ico(3737, 2089, 42, 42, svg`<path d="M3738.500 2091.500h38v31h-15l-4 6-4-6h-15z" stroke="#fff" stroke-width="2.500"/>`)}
      <div class="peek"></div>
    </div>`;
  }

  render() {
    return html`${this.titleBar()}${this.menuBar()}<excel-ribbon></excel-ribbon>${this.formulaBar()}${this.sheetArea()}${this.sheetTabs()}${this.statusBar()}${this.taskbar()}`;
  }
}
